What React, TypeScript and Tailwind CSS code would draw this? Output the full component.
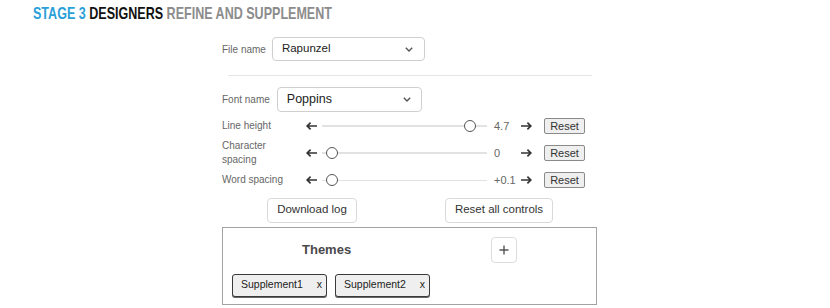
import React from 'react';

function ArrowLeft() {
  return (
    <svg width="11" height="8" viewBox="0 0 11 8" className="shrink-0">
      <path d="M1.2 4H11M4.6 0.7L1.2 4L4.6 7.3" fill="none" stroke="#333" strokeWidth="1.7" />
    </svg>
  );
}

function ArrowRight() {
  return (
    <svg width="11" height="8" viewBox="0 0 11 8" className="shrink-0">
      <path d="M0 4H9.8M6.4 0.7L9.8 4L6.4 7.3" fill="none" stroke="#333" strokeWidth="1.7" />
    </svg>
  );
}

function Chevron() {
  return (
    <svg width="8" height="5" viewBox="0 0 8 5">
      <path d="M0.8 0.8L4 4L7.2 0.8" fill="none" stroke="#555" strokeWidth="1.4" />
    </svg>
  );
}

interface SliderRowProps {
  label: string[];
  value: string;
  thumb: number;
}

function SliderRow({ label, value, thumb }: SliderRowProps) {
  return (
    <div className="flex items-center">
      <div className="w-[84px] text-[10px] leading-[14px] text-[#666]">
        {label.map((l) => (
          <div key={l}>{l}</div>
        ))}
      </div>
      <ArrowLeft />
      <div className="relative ml-[5px] h-[12px] w-[165px] flex items-center">
        <div className="h-[1.5px] w-full bg-[#e2e2e2]" />
        <div
          className="absolute top-0 h-[12px] w-[12px] rounded-full border-[1.5px] border-[#555] bg-white"
          style={{ left: thumb }}
        />
      </div>
      <div className="ml-[7px] w-[27px] text-[11px] text-[#666]">{value}</div>
      <ArrowRight />
      <button className="ml-[12px] h-[16px] w-[41px] rounded-[2px] border border-[#8a8a8a] bg-[#efefef] text-[11px] leading-[14px] text-[#333]">
        Reset
      </button>
    </div>
  );
}

function Tag({ name }: { name: string }) {
  return (
    <div className="flex h-[23px] w-[95px] items-center rounded-[3px] border-[1.5px] border-[#3a3a3a] bg-[#efefef] pl-[8px] pr-[4px] text-[10.5px] text-[#222] shadow-[0_1px_0_#666]">
      <span>{name}</span>
      <span className="ml-auto">x</span>
    </div>
  );
}

export default function App() {
  return (
    <div className="h-[308px] w-[830px] overflow-hidden bg-white font-['Liberation_Sans',Arial,sans-serif]">
      <div className="h-[22px] pl-[33px] pt-[2px]">
        <span className="inline-block origin-left scale-x-[0.76] whitespace-nowrap text-[16.5px] font-bold leading-[20px]">
          <span className="text-[#2a9fd8]">STAGE 3</span>{' '}
          <span className="text-[#111]">DESIGNERS</span>{' '}
          <span className="text-[#8c8c8c]">REFINE AND SUPPLEMENT</span>
        </span>
      </div>

      <div className="ml-[222px] w-[375px]">
        {/* File */}
        <div className="mt-[15px] flex items-center">
          <span className="mr-[6px] text-[10px] text-[#666]">File name</span>
          <div className="flex h-[24px] w-[153px] items-center justify-between rounded-[4px] border border-[#cfcfcf] bg-white pl-[9px] pr-[11px] text-[11.5px] text-[#222]">
            <span>Rapunzel</span>
            <Chevron />
          </div>
        </div>

        <div className="ml-[6px] mt-[14px] h-px w-[364px] bg-[#e6e6e6]" />

        {/* Font */}
        <div className="mt-[11px] flex items-center">
          <span className="mr-[7px] text-[10px] text-[#666]">Font name</span>
          <div className="flex h-[25px] w-[145px] items-center justify-between rounded-[4px] border border-[#cfcfcf] bg-white pl-[9px] pr-[10px] text-[12.5px] text-[#222]">
            <span>Poppins</span>
            <Chevron />
          </div>
        </div>

        <div className="mt-[5.5px] flex flex-col gap-[5px]">
          <SliderRow label={['Line height']} value="4.7" thumb={142} />
          <SliderRow label={['Character', 'spacing']} value="0" thumb={4} />
          <SliderRow label={['Word spacing']} value="+0.1" thumb={4} />
        </div>

        <div className="mt-[9px] flex">
          <button className="ml-[45px] h-[25px] w-[90px] rounded-[4px] border border-[#d9d9d9] bg-white text-[11.5px] text-[#333]">
            Download log
          </button>
          <button className="ml-[88px] h-[25px] w-[108px] rounded-[4px] border border-[#d9d9d9] bg-white text-[11.5px] text-[#333]">
            Reset all controls
          </button>
        </div>

        {/* Themes */}
        <div className="mt-[4px] h-[78px] w-[375px] border border-[#a3a3a3] pl-[9px] pt-[9px]">
          <div className="flex items-center">
            <span className="ml-[70px] text-[13px] font-bold text-[#4a4a4a]">Themes</span>
            <button className="ml-[140px] flex h-[26px] w-[26px] items-center justify-center rounded-[4px] border border-[#dcdcdc] bg-white">
              <svg width="10" height="10" viewBox="0 0 10 10">
                <path d="M5 0.5V9.5M0.5 5H9.5" stroke="#555" strokeWidth="1.4" />
              </svg>
            </button>
          </div>
          <div className="mt-[11px] flex gap-[8px]">
            <Tag name="Supplement1" />
            <Tag name="Supplement2" />
          </div>
        </div>
      </div>
    </div>
  );
}
